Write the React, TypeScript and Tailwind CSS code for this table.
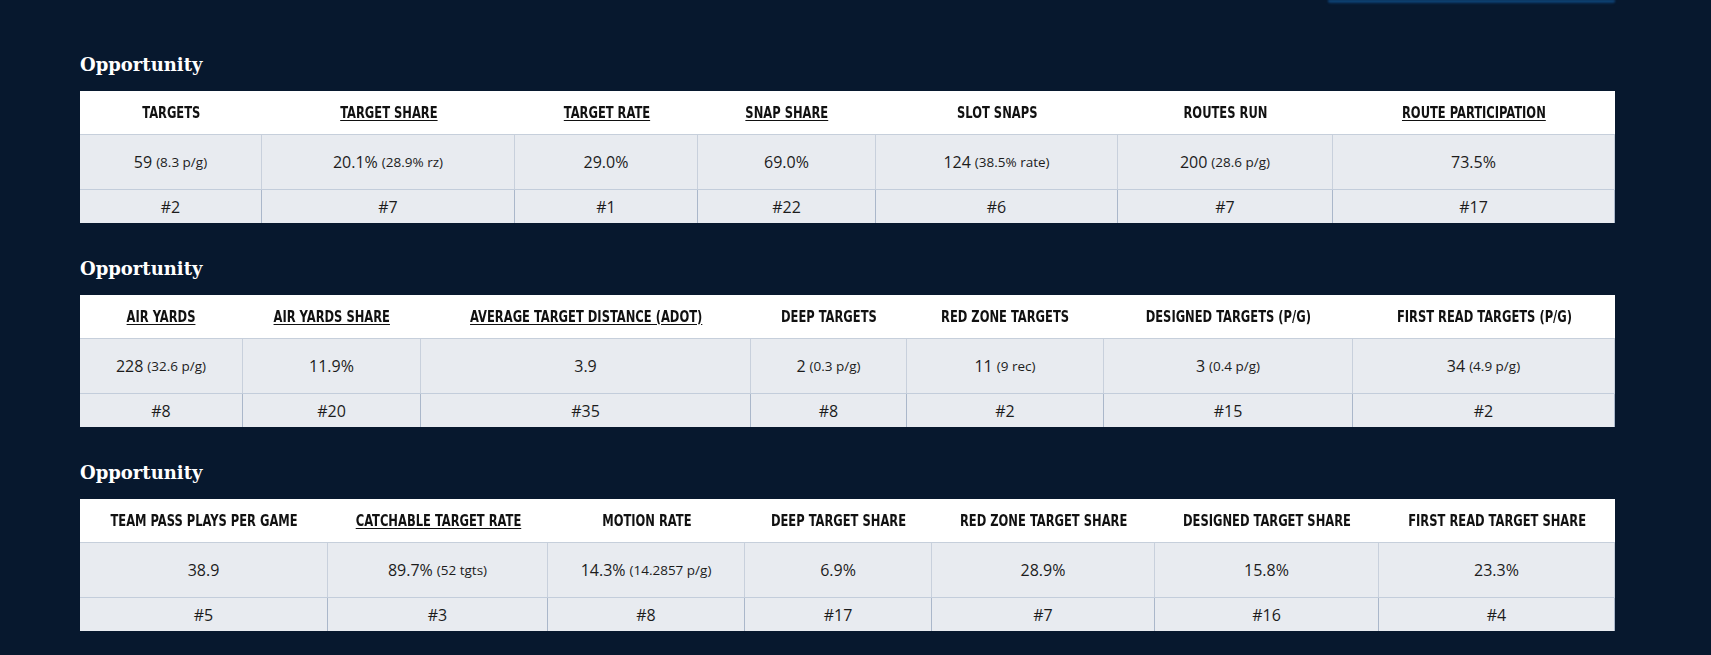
import React from "react";

interface Stat {
  label: string;
  link?: boolean;
  value: string;
  sub?: string;
  rank: string;
}

interface Section {
  title: string;
  cols: string;
  stats: Stat[];
}

const sections: Section[] = [
  {
    title: "Opportunity",
    cols: "grid-cols-[182px_253px_183px_178px_242px_215px_282px]",
    stats: [
      { label: "Targets", value: "59", sub: "(8.3 p/g)", rank: "#2" },
      { label: "Target Share", link: true, value: "20.1%", sub: "(28.9% rz)", rank: "#7" },
      { label: "Target Rate", link: true, value: "29.0%", rank: "#1" },
      { label: "Snap Share", link: true, value: "69.0%", rank: "#22" },
      { label: "Slot Snaps", value: "124", sub: "(38.5% rate)", rank: "#6" },
      { label: "Routes Run", value: "200", sub: "(28.6 p/g)", rank: "#7" },
      { label: "Route Participation", link: true, value: "73.5%", rank: "#17" },
    ],
  },
  {
    title: "Opportunity",
    cols: "grid-cols-[163px_178px_330px_156px_197px_249px_262px]",
    stats: [
      { label: "Air Yards", link: true, value: "228", sub: "(32.6 p/g)", rank: "#8" },
      { label: "Air Yards Share", link: true, value: "11.9%", rank: "#20" },
      { label: "Average Target Distance (aDOT)", link: true, value: "3.9", rank: "#35" },
      { label: "Deep Targets", value: "2", sub: "(0.3 p/g)", rank: "#8" },
      { label: "Red Zone Targets", value: "11", sub: "(9 rec)", rank: "#2" },
      { label: "Designed Targets (p/g)", value: "3", sub: "(0.4 p/g)", rank: "#15" },
      { label: "First Read Targets (p/g)", value: "34", sub: "(4.9 p/g)", rank: "#2" },
    ],
  },
  {
    title: "Opportunity",
    cols: "grid-cols-[248px_220px_197px_187px_223px_224px_236px]",
    stats: [
      { label: "Team Pass Plays Per Game", value: "38.9", rank: "#5" },
      { label: "Catchable Target Rate", link: true, value: "89.7%", sub: "(52 tgts)", rank: "#3" },
      { label: "Motion Rate", value: "14.3%", sub: "(14.2857 p/g)", rank: "#8" },
      { label: "Deep Target Share", value: "6.9%", rank: "#17" },
      { label: "Red Zone Target Share", value: "28.9%", rank: "#7" },
      { label: "Designed Target Share", value: "15.8%", rank: "#16" },
      { label: "First Read Target Share", value: "23.3%", rank: "#4" },
    ],
  },
];

function StatTable({ section }: { section: Section }) {
  return (
    <div className="mb-[34px]">
      <h2 className="font-['DejaVu_Serif',serif] text-[18px] leading-[24px] font-bold text-white mb-[14px]">
        {section.title}
      </h2>
      <div className="w-full">
        {/* labels */}
        <div className={`grid ${section.cols} h-[43px] bg-white`}>
          {section.stats.map((s) => (
            <div
              key={s.label}
              className="flex items-center justify-center font-['Liberation_Sans_Narrow','DejaVu_Sans_Condensed',sans-serif] font-bold text-[16px] uppercase text-[#111]"
            >
              <span
                className={`inline-block whitespace-nowrap scale-x-[0.8] ${
                  s.link ? "underline underline-offset-2" : ""
                }`}
              >
                {s.label}
              </span>
            </div>
          ))}
        </div>

        {/* values */}
        <div
          className={`grid ${section.cols} h-[55px] bg-[#e8ebf0] border-t border-[#c6cfdb] font-['Open_Sans',sans-serif] text-[#1c1c1c]`}
        >
          {section.stats.map((s) => (
            <div
              key={s.label}
              className="flex items-center justify-center text-[16px] border-r border-[#c8d0dc]"
            >
              {s.value}
              {s.sub && <span className="ml-1 text-[13.5px]">{s.sub}</span>}
            </div>
          ))}
        </div>

        {/* ranks */}
        <div
          className={`grid ${section.cols} h-[34px] bg-[#e8ebf0] border-t border-[#c3cddb] font-['Open_Sans',sans-serif] text-[#1c1c1c]`}
        >
          {section.stats.map((s) => (
            <div
              key={s.label}
              className="flex items-center justify-center text-[16px] border-r border-[#aab7ca]"
            >
              {s.rank}
            </div>
          ))}
        </div>
      </div>
    </div>
  );
}

export default function App() {
  return (
    <div className="min-h-screen bg-[#07182e] pl-[80px] pr-[96px]">
      {/* bottom edge of a button scrolled off the top */}
      <div className="flex justify-end">
        <div className="w-[287px] h-[4px] rounded-b-full bg-linear-to-b from-[#1463a8] via-[#0b3a6a] to-transparent blur-[1px]" />
      </div>
      <div className="pt-[49px]">
        {sections.map((section, i) => (
          <StatTable key={i} section={section} />
        ))}
      </div>
    </div>
  );
}
